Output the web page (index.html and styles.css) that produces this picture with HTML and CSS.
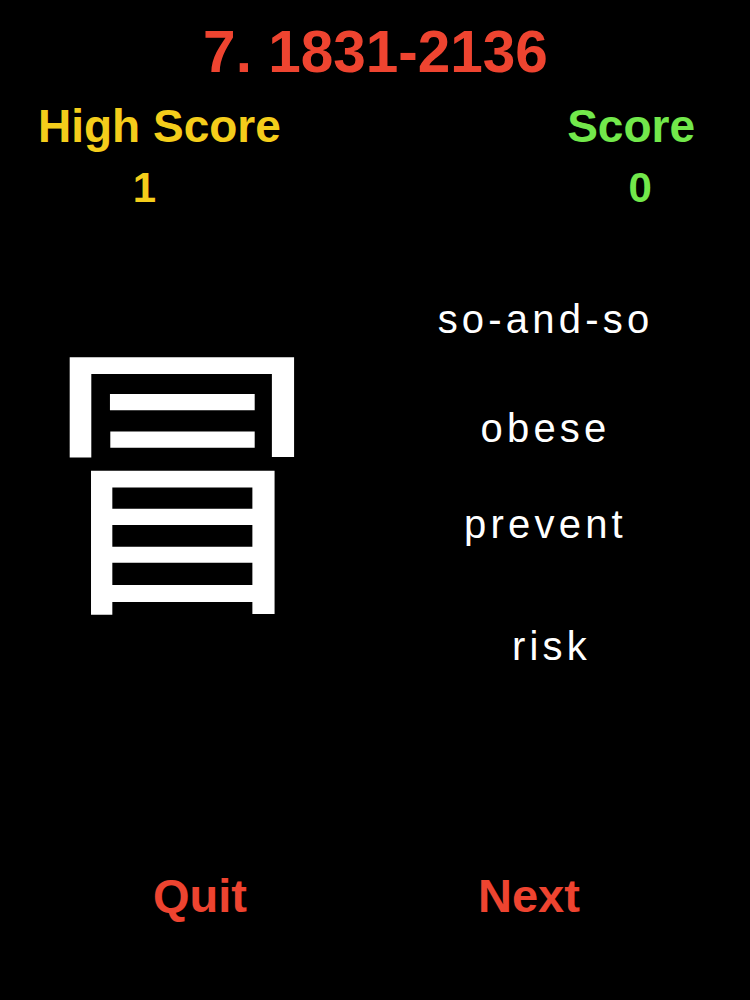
FILE: index.html
```html
<!DOCTYPE html>
<html>
<head>
<meta charset="utf-8">
<link rel="stylesheet" href="styles.css">
</head>
<body>
<div class="app">
  <div class="title">7. 1831-2136</div>
  <div class="header">
    <div class="col col-high">
      <div class="label">High Score</div>
      <div class="num num-high">1</div>
    </div>
    <div class="col col-score">
      <div class="label">Score</div>
      <div class="num num-score">0</div>
    </div>
  </div>
  <div class="main">
    <div class="kanji-col"><div class="kanji" lang="zh-Hant">冒</div></div>
    <div class="options">
      <div class="opt opt1">so-and-so</div>
      <div class="opt opt2">obese</div>
      <div class="opt opt3">prevent</div>
      <div class="opt opt4">risk</div>
    </div>
  </div>
  <div class="footer">
    <div class="btn">Quit</div>
    <div class="btn">Next</div>
  </div>
</div>
</body>
</html>
```
FILE: styles.css
```css
html, body {
  margin: 0;
  padding: 0;
  background: #000;
}
.app {
  width: 750px;
  height: 1000px;
  display: flex;
  flex-direction: column;
  font-family: "Liberation Sans", Arial, sans-serif;
  background: #000;
  overflow: hidden;
}
.title {
  margin-top: 23px;
  height: 58px;
  font-size: 58.5px;
  line-height: 58px;
  text-align: center;
  color: #ee4430;
  font-weight: 700;
  padding-left: 1px;
}
.header {
  margin-top: 22px;
  display: flex;
  justify-content: space-between;
  padding: 0 55px 0 38px;
}
.col {
  display: flex;
  flex-direction: column;
  text-align: center;
}
.label {
  font-size: 46px;
  line-height: 46px;
  font-weight: 700;
}
.num {
  margin-top: 18px;
  font-size: 42px;
  line-height: 42px;
  font-weight: 700;
}
.col-high { color: #f4cd1b; }
.col-score { color: #72e84b; }
.num-high { padding-right: 30px; }
.num-score { padding-left: 18px; }
.main {
  display: flex;
}
.kanji-col {
  width: 365px;
  display: flex;
  justify-content: center;
  padding-top: 106px;
}
.kanji {
  font-family: "Noto Sans CJK TC", "Noto Sans CJK JP", sans-serif;
  font-weight: 400;
  font-size: 296px;
  line-height: 296px;
  color: #fff;
}
.options {
  flex: 1;
  display: flex;
  flex-direction: column;
  align-items: center;
  padding-top: 90px;
  padding-right: 24px;
  color: #fff;
}
.opt {
  font-size: 40px;
  line-height: 40px;
  letter-spacing: 4.2px;
}
.opt2 { margin-top: 69px; }
.opt3 { margin-top: 56px; }
.opt4 { margin-top: 82px; padding-left: 12px; }
.footer {
  margin-top: auto;
  padding: 0 0 81px 153px;
  display: flex;
  gap: 231px;
}
.btn {
  font-size: 47px;
  line-height: 47px;
  font-weight: 700;
  color: #ee4430;
}
```
